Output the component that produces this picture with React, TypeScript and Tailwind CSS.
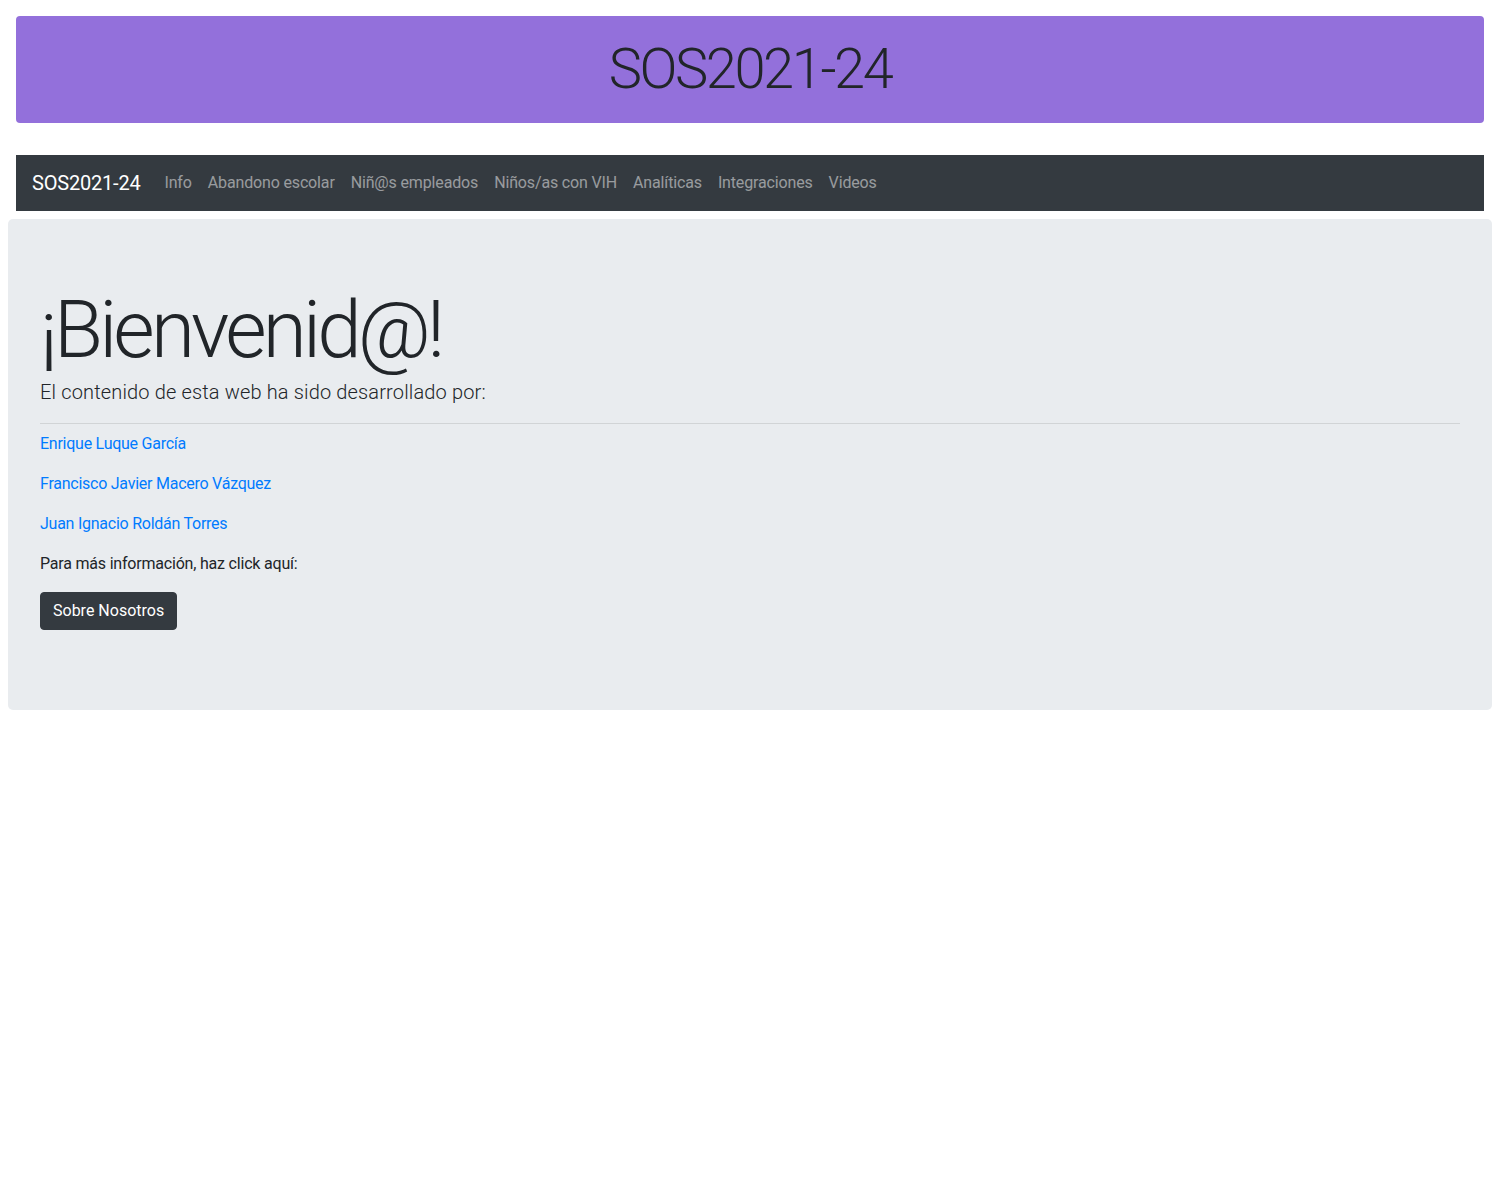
const navLinks = [
  "Info",
  "Abandono escolar",
  "Niñ@s empleados",
  "Niños/as con VIH",
  "Analíticas",
  "Integraciones",
  "Videos",
];

const authors = [
  "Enrique Luque García",
  "Francisco Javier Macero Vázquez",
  "Juan Ignacio Roldán Torres",
];

export default function App() {
  return (
    <div className="min-h-screen bg-white font-['Roboto','Liberation_Sans',sans-serif] text-[#212529]">
      <div className="mx-4 mb-8 mt-4 rounded bg-[#9370db] py-5 text-center">
        <h1 className="text-[56px] font-light leading-[1.2] tracking-[-2.4px]">SOS2021-24</h1>
      </div>

      <nav className="mx-4 flex h-14 items-center bg-[#343a40] px-4">
        <a href="#" className="mr-4 text-[20px] leading-[30px] tracking-[-0.2px] text-white">
          SOS2021-24
        </a>
        <ul className="flex">
          {navLinks.map((link) => (
            <li key={link}>
              <a href="#" className="block px-2 py-2 text-base leading-6 tracking-[-0.15px] text-white/50">
                {link}
              </a>
            </li>
          ))}
        </ul>
      </nav>

      <div className="mx-2 mt-2 rounded-[5px] bg-[#e9ecef] px-8 py-16">
        <h1 className="text-[80px] font-light leading-[94px] tracking-[-3.8px]">¡Bienvenid@!</h1>
        <p className="text-[20px] font-light leading-[30px] tracking-[0.15px]">
          El contenido de esta web ha sido desarrollado por:
        </p>
        <hr className="mb-2 mt-4 border-t border-black/10" />
        {authors.map((name) => (
          <p key={name} className="mb-4 text-base leading-6 tracking-[-0.25px]">
            <a href="#" className="text-[#007bff]">
              {name}
            </a>
          </p>
        ))}
        <p className="mb-4 text-base leading-6 tracking-[-0.2px]">Para más información, haz click aquí:</p>
        <button
          type="button"
          className="mb-4 rounded border border-[#343a40] bg-[#343a40] px-3 py-1.5 text-base leading-6 text-white"
        >
          Sobre Nosotros
        </button>
      </div>
    </div>
  );
}
